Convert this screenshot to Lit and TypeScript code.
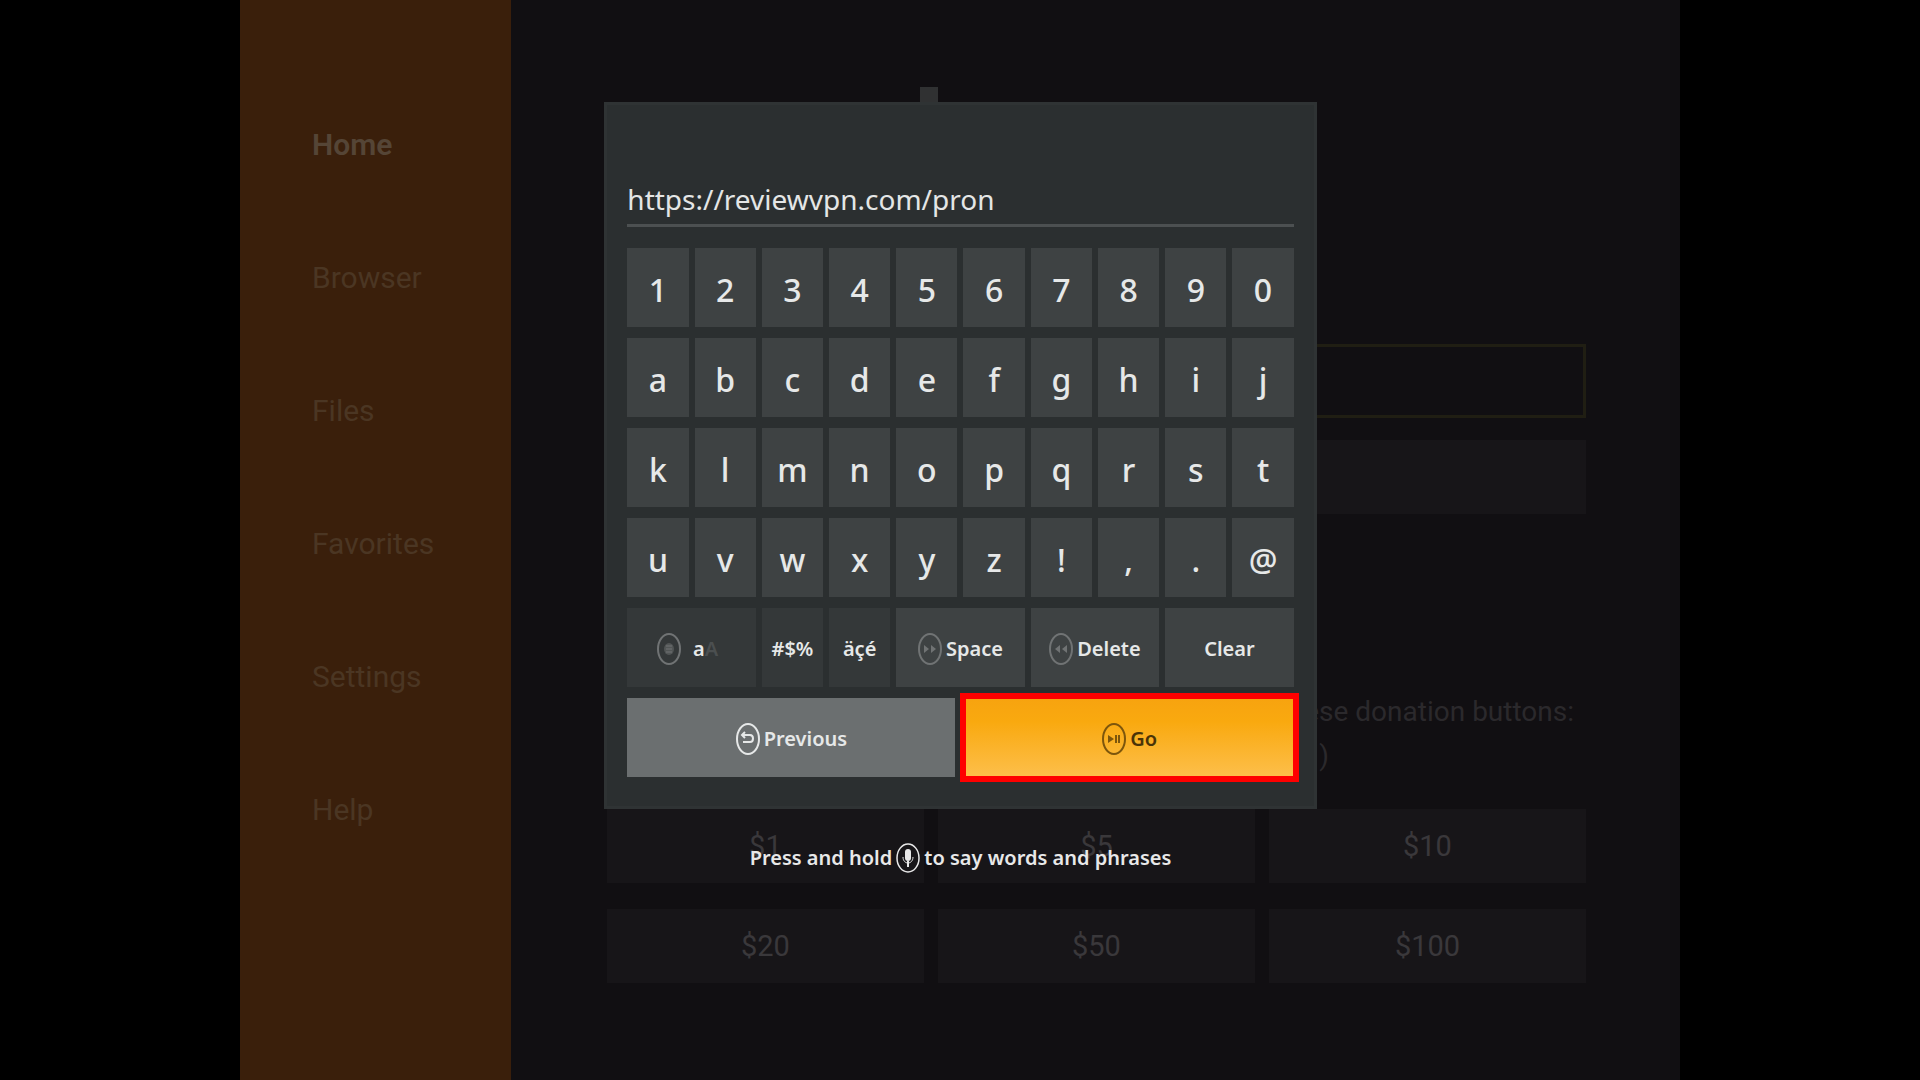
import { LitElement, html, css, svg } from "lit";
import { customElement, state } from "lit/decorators.js";
import { classMap } from "lit/directives/class-map.js";

const MENU = ["Home", "Browser", "Files", "Favorites", "Settings", "Help"];
const AMOUNTS = ["$1", "$5", "$10", "$20", "$50", "$100"];
const KEYS = [..."1234567890abcdefghijklmnopqrstuvwxyz!,.@"];

const ring = svg`<ellipse cx="12" cy="16" rx="11" ry="15" fill="none" stroke="currentColor" stroke-width="2"/>`;

const icons = {
  menu: svg`${ring}<ellipse cx="12" cy="16" rx="5" ry="6" fill="currentColor" opacity=".5"/><path d="M9 13h6M9 16h6M9 19h6" stroke="currentColor" stroke-width="1" fill="none"/>`,
  forward: svg`${ring}<path d="M6 12l5 4-5 4zM13 12l5 4-5 4z" fill="currentColor"/>`,
  rewind: svg`${ring}<path d="M11 12l-5 4 5 4zM18 12l-5 4 5 4z" fill="currentColor"/>`,
  back: svg`${ring}<path d="M7 12h7c4 0 4 7 0 7H7M9 9l-3 3 3 3" fill="none" stroke="currentColor" stroke-width="2"/>`,
  play: svg`${ring}<path d="M6 12l6 4-6 4z" fill="currentColor"/><path d="M14 12v8M17 12v8" stroke="currentColor" stroke-width="2" fill="none"/>`,
  mic: svg`<ellipse cx="12" cy="16" rx="11" ry="14" fill="none" stroke="currentColor" stroke-width="1.500"/><rect x="9" y="7" width="6" height="12" rx="3" fill="currentColor"/><path d="M7 15c0 8 10 8 10 0" fill="none" stroke="currentColor" stroke-width="1"/><path d="M12 19v6" stroke="currentColor" stroke-width="2"/>`,
};

type IconName = keyof typeof icons;

const icon = (name: IconName) =>
  html`<svg class="icon ${name}" viewBox="0 0 24 32" aria-hidden="true">${icons[name]}</svg>`;

@customElement("side-menu")
class SideMenu extends LitElement {
  static styles = css`
    :host {
      display: block;
      background: #3a1f0b;
      font-family: Roboto, sans-serif;
    }
    .list {
      display: flex;
      flex-direction: column;
      gap: 93px;
      padding: 125px 0 0 72px;
    }
    .link {
      font-size: 30px;
      line-height: 40px;
      color: #4b3623;
      text-decoration: none;
    }
    .current {
      font-weight: 600;
      color: #554536;
    }
  `;

  render() {
    return html`<nav class="list">
      ${MENU.map(
        (label, i) =>
          html`<a href="#" class=${classMap({ link: true, current: i === 0 })}>${label}</a>`
      )}
    </nav>`;
  }
}

@customElement("home-page")
class HomePage extends LitElement {
  static styles = css`
    :host {
      display: block;
      background: #110f12;
      font-family: Roboto, sans-serif;
    }
    .body {
      display: flex;
      flex-direction: column;
      padding: 87px 94px 0 96px;
    }
    .mark {
      width: 18px;
      height: 28px;
      margin: 0 0 229px 313px;
      background: #303132;
    }
    .address {
      box-sizing: border-box;
      height: 74px;
      border: 3px solid #201e13;
      background: #110f12;
      color: #333;
    }
    .wide {
      height: 74px;
      margin-top: 22px;
      border: 0;
      background: #171518;
    }
    .note {
      margin: 176px 12px 0 0;
      font-size: 28px;
      line-height: 44px;
      text-align: right;
      color: #2b292c;
    }
    .tail {
      display: block;
      padding-right: 245px;
    }
    .amounts {
      display: grid;
      grid-template-columns: repeat(3, 1fr);
      gap: 26px 14px;
      margin-top: 31px;
    }
    .amount {
      height: 74px;
      border: 0;
      background: #171518;
      font: 29px Roboto, sans-serif;
      color: #3a383b;
    }
  `;

  render() {
    return html`<div class="body">
      <div class="mark"></div>
      <input class="address" aria-label="Address" />
      <button class="wide" aria-label="Open"></button>
      <p class="note">these donation buttons:<span class="tail">)</span></p>
      <div class="amounts">
        ${AMOUNTS.map((a) => html`<button class="amount">${a}</button>`)}
      </div>
    </div>`;
  }
}

@customElement("key-board")
class KeyBoard extends LitElement {
  static styles = css`
    :host {
      display: block;
      box-sizing: border-box;
      padding: 70px 23px 32px;
      background: #2b2f30;
      box-shadow: inset 0 0 0 3px #2f3334;
      font-family: "Noto Sans", sans-serif;
    }
    .url {
      display: block;
      box-sizing: border-box;
      width: 100%;
      height: 55px;
      margin-bottom: 21px;
      padding: 2px 0 0;
      border: 0;
      border-bottom: 3px solid #4c5051;
      background: none;
      font: 28px "Noto Sans", sans-serif;
      color: #e4e6e6;
      outline: none;
    }
    .keys {
      display: grid;
      grid-template-columns: repeat(10, 1fr);
      grid-auto-rows: 79px;
      gap: 11px 6px;
    }
    .key {
      display: flex;
      align-items: center;
      justify-content: center;
      gap: 4px;
      padding: 4px 0 0;
      border: 0;
      background: #3e4243;
      font: 500 32px "Noto Sans", sans-serif;
      color: #e6e8e8;
    }
    .word {
      padding: 2px 0 0;
      font-size: 20px;
      font-weight: 600;
    }
    .double {
      grid-column: span 2;
    }
    .dim {
      background: #343839;
    }
    .case {
      gap: 12px;
      padding-right: 8px;
    }
    .off {
      color: #4b4f50;
    }
    .actions {
      display: grid;
      grid-template-columns: 1fr 1fr;
      grid-auto-rows: 79px;
      gap: 10px;
      margin-top: 11px;
    }
    .previous {
      background: #6b6f70;
    }
    .go {
      background: linear-gradient(#f7a30f, #f9a90f 30%, #fdbf4b);
      color: #4a3408;
      outline: 6px solid #f00;
      outline-offset: -1px;
    }
    .icon {
      width: 24px;
      height: 32px;
    }
    .menu,
    .forward,
    .rewind {
      color: #707374;
    }
    .play {
      color: #7d560c;
    }
  `;

  @state() private url = "https://reviewvpn.com/pron";

  private type(key: string) {
    this.url += key;
  }

  render() {
    return html`
      <input
        class="url"
        aria-label="URL"
        .value=${this.url}
        @input=${(e: Event) => (this.url = (e.target as HTMLInputElement).value)}
      />
      <div class="keys">
        ${KEYS.map((k) => html`<button class="key" @click=${() => this.type(k)}>${k}</button>`)}
        <button class="key word double dim case">
          ${icon("menu")}<span>a<span class="off">A</span></span>
        </button>
        <button class="key word dim">#$%</button>
        <button class="key word dim">äçé</button>
        <button class="key word double" @click=${() => this.type(" ")}>
          ${icon("forward")}Space
        </button>
        <button class="key word double" @click=${() => (this.url = this.url.slice(0, -1))}>
          ${icon("rewind")}Delete
        </button>
        <button class="key word double" @click=${() => (this.url = "")}>Clear</button>
      </div>
      <div class="actions">
        <button class="key word previous">${icon("back")}Previous</button>
        <button class="key word go">${icon("play")}Go</button>
      </div>
    `;
  }
}

@customElement("app-root")
class AppRoot extends LitElement {
  static styles = css`
    :host {
      display: flex;
      justify-content: center;
      min-height: 100vh;
      background: #000;
    }
    .screen {
      position: relative;
      display: grid;
      grid-template-columns: 19fr 82fr;
      width: 75%;
      overflow: hidden;
    }
    .overlay {
      position: absolute;
      inset: 0;
      display: flex;
      flex-direction: column;
      align-items: center;
      padding: 102px 0 0 1px;
    }
    .panel {
      width: 49.5%;
    }
    .hint {
      display: flex;
      align-items: center;
      gap: 4px;
      margin: 33px 0 0;
      font: 600 20px/32px "Noto Sans", sans-serif;
      color: #e8e8e8;
    }
    .icon {
      width: 24px;
      height: 32px;
    }
  `;

  render() {
    return html`<div class="screen">
      <side-menu></side-menu>
      <home-page></home-page>
      <div class="overlay">
        <key-board class="panel"></key-board>
        <p class="hint">Press and hold ${icon("mic")} to say words and phrases</p>
      </div>
    </div>`;
  }
}
